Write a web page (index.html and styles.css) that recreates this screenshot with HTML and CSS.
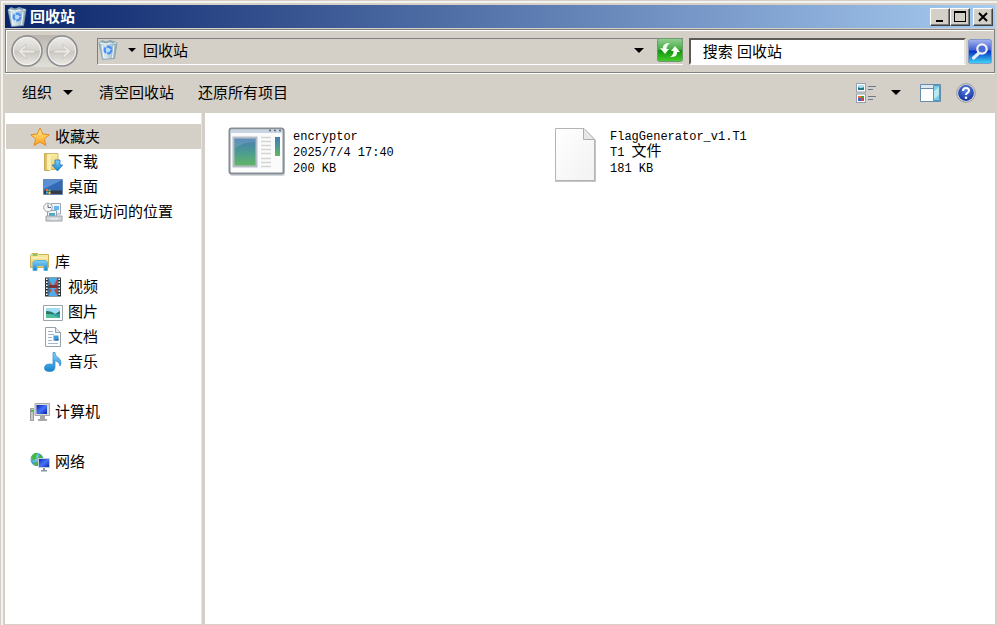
FILE: index.html
```html
<!DOCTYPE html>
<html lang="zh-CN">
<head>
<meta charset="utf-8">
<title>回收站</title>
<link rel="stylesheet" href="styles.css">
</head>
<body>
<svg class="defs" aria-hidden="true">
  <defs>
    <linearGradient id="bin" x1="0" y1="0" x2="1" y2="0"><stop offset="0" stop-color="#8eaebd"/><stop offset=".35" stop-color="#d9e9ee"/><stop offset="1" stop-color="#86a3b2"/></linearGradient>
    <linearGradient id="gold" x1="0" y1="0" x2="0" y2="1"><stop offset="0" stop-color="#fff08a"/><stop offset="1" stop-color="#ff9d1c"/></linearGradient>
    <linearGradient id="folder" x1="0" y1="0" x2="0" y2="1"><stop offset="0" stop-color="#faeea6"/><stop offset="1" stop-color="#e3c66b"/></linearGradient>
    <linearGradient id="sky" x1="0" y1="0" x2="0" y2="1"><stop offset="0" stop-color="#82d2f7"/><stop offset="1" stop-color="#1583d0"/></linearGradient>
    <linearGradient id="screen" x1="0" y1="0" x2="1" y2="1"><stop offset="0" stop-color="#0a1bb0"/><stop offset=".5" stop-color="#4474f4"/><stop offset="1" stop-color="#0b1ca8"/></linearGradient>
    <linearGradient id="app" x1="0" y1="0" x2="0" y2="1"><stop offset="0" stop-color="#4679b4"/><stop offset=".5" stop-color="#4c9b93"/><stop offset="1" stop-color="#63b763"/></linearGradient>
    <linearGradient id="sheet" x1="0" y1="0" x2="1" y2="1"><stop offset="0" stop-color="#ffffff"/><stop offset="1" stop-color="#f2f2f2"/></linearGradient>
    <linearGradient id="green" x1="0" y1="0" x2="0" y2="1"><stop offset="0" stop-color="#93cf93"/><stop offset=".48" stop-color="#45ab42"/><stop offset=".5" stop-color="#0f910e"/><stop offset="1" stop-color="#47ce2c"/></linearGradient>
    <linearGradient id="blue" x1="0" y1="0" x2="0" y2="1"><stop offset="0" stop-color="#a6b6ee"/><stop offset=".42" stop-color="#4762d4"/><stop offset=".5" stop-color="#0b36c6"/><stop offset="1" stop-color="#3bdcf7"/></linearGradient>
    <linearGradient id="disc" x1="0" y1="0" x2="0" y2="1"><stop offset="0" stop-color="#efedea"/><stop offset=".48" stop-color="#d6d3ce"/><stop offset=".52" stop-color="#c9c5bf"/><stop offset="1" stop-color="#eeece8"/></linearGradient>
    <radialGradient id="help" cx=".5" cy=".3" r=".7"><stop offset="0" stop-color="#5d83e2"/><stop offset="1" stop-color="#12319d"/></radialGradient>
    <radialGradient id="globe" cx=".35" cy=".35" r=".7"><stop offset="0" stop-color="#9be6ff"/><stop offset="1" stop-color="#1470c4"/></radialGradient>
    <symbol id="recycle" viewBox="0 0 20 20">
      <path d="M1 3 4 0.500 8 2 12 0.500 19 2.500 16.500 18.500 4.500 19.500Z" fill="url(#bin)" stroke="#7f9dab" stroke-width=".8"/>
      <path d="M1.500 3 6 4 12 3 18.500 3M4 5 6 18M16 5 14.500 18" fill="none" stroke="#f3fafc" stroke-width="1"/>
      <path d="M4 1.500 8 3 12 1.500 16 3" fill="none" stroke="#5d7d8e" stroke-width=".7"/>
      <circle cx="10" cy="10" r="3.400" fill="#b9dcfa" stroke="#4a8ff0" stroke-width="2.200" stroke-dasharray="6 1.100"/>
    </symbol>
  </defs>
</svg>
<div class="window">
  <header class="titlebar">
    <svg class="icon20" aria-hidden="true"><use href="#recycle"/></svg>
    <h1>回收站</h1>
    <div class="window-buttons">
      <button type="button" aria-label="最小化"><svg viewBox="0 0 16 14"><path d="M4 10h7v2H4z"/></svg></button>
      <button type="button" aria-label="最大化"><svg viewBox="0 0 16 14"><path d="M2 1h12v11H2zM3 3v8h10V3z" fill-rule="evenodd"/></svg></button>
      <button type="button" class="close" aria-label="关闭"><svg viewBox="0 0 16 14"><path d="m4 3 8 8m0-8-8 8" fill="none" stroke="#000" stroke-width="2"/></svg></button>
    </div>
  </header>

  <div class="navbar">
    <div class="history">
      <button type="button" aria-label="后退"><svg viewBox="0 0 32 32"><circle cx="16" cy="16" r="15" fill="url(#disc)" stroke="#8b8d91" stroke-width="1.500"/><circle cx="16" cy="16" r="13.600" fill="none" stroke="#f4f2ee"/><path d="M7 16 15 9v4L12 15H24v3H12l3 2v4Z" fill="#e9e7e3" stroke="#c6c3bd" stroke-width=".8"/></svg></button>
      <button type="button" aria-label="前进"><svg viewBox="0 0 32 32"><circle cx="16" cy="16" r="15" fill="url(#disc)" stroke="#8b8d91" stroke-width="1.500"/><circle cx="16" cy="16" r="13.600" fill="none" stroke="#f4f2ee"/><path d="M25 16 17 9v4L20 15H8v3H20l-3 2v4Z" fill="#e9e7e3" stroke="#c6c3bd" stroke-width=".8"/></svg></button>
    </div>
    <div class="address">
      <svg class="icon20" aria-hidden="true"><use href="#recycle"/></svg>
      <button type="button" class="crumb"><svg class="arrow-small" viewBox="0 0 8 4"><path d="M0 0h8L4 4z"/></svg><span>回收站</span></button>
      <button type="button" class="drop" aria-label="以前的位置"><svg class="arrow" viewBox="0 0 10 5"><path d="M0 0h10L5 5z"/></svg></button>
      <button type="button" class="refresh" aria-label="刷新"><svg viewBox="0 0 26 24"><rect x=".5" y=".5" width="25" height="23" rx="2" fill="url(#green)" stroke="#6c9a6c"/><path d="M3 10 8 16 12 11H9.500Q9.500 7.500 13 5 5.500 5 5.800 10.500ZM23 14 18 8 14 13h2.500Q16.500 17 13 19 20.500 19.500 20.200 14Z" fill="#f5fff2"/></svg></button>
    </div>
    <form class="search">
      <input type="text" aria-label="搜索" placeholder="搜索 回收站">
      <button type="button" aria-label="搜索"><svg viewBox="0 0 24 25"><rect x=".5" y=".5" width="23" height="24" rx="2" fill="url(#blue)" stroke="#8299cc"/><path d="m11 14-5.500 5" stroke="#e9edf5" stroke-width="3.200" stroke-linecap="round"/><circle cx="14" cy="10" r="4.700" fill="#4a6ad6" stroke="#f1f3f8" stroke-width="2.200"/></svg></button>
    </form>
  </div>

  <div class="commands">
    <button type="button" class="organize">组织<svg class="arrow" viewBox="0 0 10 5"><path d="M0 0h10L5 5z"/></svg></button>
    <button type="button">清空回收站</button>
    <button type="button">还原所有项目</button>
    <div class="view-tools">
      <button type="button" aria-label="更改视图"><svg class="icon20" viewBox="0 0 20 20"><g fill="#fff" stroke="#94a1b1"><rect x=".5" y=".5" width="9" height="8.500"/><rect x=".5" y="11" width="9" height="8.500"/></g><path d="M2 2h6v3H2z" fill="#b1e0f6"/><path d="M2 4q3 2 6 0v3H2z" fill="#267b83"/><path d="M2 13h3v2H2z" fill="#e0752b"/><path d="M5 13h3v2H5z" fill="#3ba349"/><path d="M2 15h3v3H2z" fill="#5a5fc1"/><path d="M5 15h3v3H5z" fill="#d34343"/><path d="M12 3.500h8M12 6.500h5M12 13.500h8M12 16.500h5" stroke="#6b7a8c" stroke-width="1.200"/></svg></button>
      <button type="button" class="more" aria-label="更多选项"><svg class="arrow" viewBox="0 0 10 5"><path d="M0 0h10L5 5z"/></svg></button>
      <button type="button" aria-label="显示预览窗格"><svg class="pane-icon" viewBox="0 0 21 18"><path d="M.5.500h20v17H.5z" fill="#fff" stroke="#668bad"/><path d="M1 1h19v3H1z" fill="#dce8f2"/><path d="M1 4.500h13" stroke="#668bad"/><path d="M13.500 1.500h6v15h-6z" fill="#7bcde4" stroke="#4b99bf"/><path d="m14 7 5-4v8l-5 4z" fill="#b8e9f3"/></svg></button>
      <button type="button" class="help" aria-label="帮助"><svg class="icon20" viewBox="0 0 20 20"><circle cx="10" cy="10" r="9.300" fill="#dcdcdf" stroke="#9698a0"/><circle cx="10" cy="10" r="7.900" fill="url(#help)"/><path d="M7 8q0-3 3-3t3 2.600q0 1.400-1.500 2.300T10 12" fill="none" stroke="#fff" stroke-width="2"/><circle cx="10" cy="14.700" r="1.300" fill="#fff"/></svg></button>
    </div>
  </div>

  <div class="content">
    <nav class="sidebar" aria-label="导航">
      <section>
        <a href="#" class="root selected"><svg class="icon20" viewBox="0 0 20 20"><path d="m10 1 2.700 6 6.500.7-4.900 4.300 1.500 6.500L10 15l-5.800 3.500L5.700 12 .8 7.700 7.300 7Z" fill="url(#gold)" stroke="#e58a24" stroke-linejoin="round"/></svg>收藏夹</a>
        <a href="#"><svg class="icon20" viewBox="0 0 20 20"><path d="M1.500 1.500h6v17h-6z" fill="#dfc36c" stroke="#c9a952"/><path d="M4.500 1.500H15v16H4.500z" fill="url(#folder)" stroke="#d2b768"/><path d="m4 2 4 2v15l-4-1.500z" fill="#fbefaf"/><path d="M12 8h5v5h2.700l-5.200 6L9.300 13H12Z" fill="url(#sky)" stroke="#1976bf" stroke-width=".8"/></svg>下载</a>
        <a href="#"><svg class="icon20" viewBox="0 0 20 20"><path d="M.5 2.500h19v15H.5z" fill="#3469b5" stroke="#668aaf"/><path d="M1 3h18L1 12z" fill="#5a91d6"/><path d="M1 13.500h18V17H1z" fill="#353d4b"/><path d="M3 12h2v2H3z" fill="#f36f31"/><path d="M5.500 12.500h2v2h-2z" fill="#7acc49"/><path d="M3 14.500h2v2H3z" fill="#41b8f5"/><path d="M5.500 15h2v2h-2z" fill="#ffd348"/></svg>桌面</a>
        <a href="#"><svg class="icon20" viewBox="0 0 20 20"><path d="M8.500 1.500h9V12h-9z" fill="#eef4f8" stroke="#9cabb6"/><path d="M11 4h5v4h-5z" fill="#64b8f2"/><path d="M4.500 8.500h9V17h-9z" fill="#f1f6f8" stroke="#96a4ae"/><path d="M6 11h6v3H6z" fill="#48abc9"/><path d="M3 14h16v5H3z" fill="#d1d6da" stroke="#9ba2a8"/><path d="M7 17h8" stroke="#f4f4f4"/><circle cx="5" cy="5.500" r="4.300" fill="#f3f5f6" stroke="#9ca3a9"/><path d="M5 2.500v3H8" fill="none" stroke="#66717a"/></svg>最近访问的位置</a>
      </section>
      <section>
        <a href="#" class="root"><svg class="icon20" viewBox="0 0 20 20"><path d="M.5 3.500 2 1.500h6l1 1h9.500v13H.5z" fill="url(#folder)" stroke="#cdb15a"/><path d="M2.500 3h5" stroke="#69b64a" stroke-width="1.500"/><path d="M1 6h17" stroke="#fff6ca"/><path d="M3 18.500V10l2.500-1.500h10L17.500 10v8.500H14v-5H7v5Z" fill="url(#sky)" stroke="#5db2da"/></svg>库</a>
        <a href="#"><svg class="icon20" viewBox="0 0 20 20"><path d="M2 .5h16v19H2z" fill="#29363e"/><path d="M5.500 1h9v8.500h-9zM5.500 10.500h9V19h-9z" fill="#4fabe7"/><path d="m6 3 3 5-3 1zM14 2l-3 6 3 1zM6 17l3-4-3-2zM14 18l-3-5 3-2z" fill="#b64b48"/><path d="M6 8h8v3H6z" fill="#7c3336"/><path d="M3.800 1.500v18M16.200 1.500v18" stroke="#fff" stroke-width="1.600" stroke-dasharray="1.500 1.500"/></svg>视频</a>
        <a href="#"><svg class="icon20" viewBox="0 0 20 20"><path d="M.5 3.500h19v15H.5z" fill="#fff" stroke="#9ba3aa"/><path d="M3 6h14v10H3z" fill="#a3dcf5"/><path d="M3 9q6 0 9 3l5-3v4H3z" fill="#267b62"/><path d="M3 12h14v4H3z" fill="#2b9dae"/><path d="m3 12 6 .4L17 16H3z" fill="#53be9c"/></svg>图片</a>
        <a href="#"><svg class="icon20" viewBox="0 0 20 20"><path d="M2.500.5h10l5 5v14h-15z" fill="#fcfdfe" stroke="#98a1aa"/><path d="M12.500.5v5h5" fill="#e0e6eb" stroke="#98a1aa"/><path d="M5 4.500h5M5 7.500h6M5 10.500h4M5 13.500h4M5 16.500h10" stroke="#a6b5c8"/><path d="M10.500 8.500h5v5h-5z" fill="#3e9bd1"/><path d="m10.500 13.500 5-2v2z" fill="#3559a1"/></svg>文档</a>
        <a href="#"><svg class="icon20" viewBox="0 0 20 20"><path d="M10 .5h2q0 3 3.500 5.500 4 3.500 1.500 8-.4-4-5-5.500V15q0 4.500-5.500 4.500-5 0-5-3.500 0-4 5.500-4 2 0 3 .5Z" fill="url(#sky)" stroke="#2e87c8" stroke-width=".7"/></svg>音乐</a>
      </section>
      <section>
        <a href="#" class="root"><svg class="icon20" viewBox="0 0 20 20"><path d="M.5 6.500h3v12h-3z" fill="#c6c9c8" stroke="#989b9b"/><path d="M1 8h2v2H1z" fill="#40bf39"/><path d="M5 1.500h14.500v12H5z" fill="#d9dbd9" stroke="#a5a8a7"/><path d="M6.500 3H17v9H6.500z" fill="url(#screen)"/><path d="M10 14h5v3h2v2H8v-2h2z" fill="#a6a8a6"/></svg>计算机</a>
      </section>
      <section>
        <a href="#" class="root"><svg class="icon20" viewBox="0 0 20 20"><circle cx="7" cy="7.500" r="6.500" fill="url(#globe)"/><path d="M1 5q3-5 7-4L6 4 7 6 3 9zM3 11l4-1 1 4q-4 0-5-3zM10 2l3 4-3 1-2-2z" fill="#47b647"/><path d="M8.500 6.500h11v9h-11z" fill="url(#screen)" stroke="#c3ced8"/><path d="M13 16h2v2h2v1.500h-6V18h2z" fill="#8395a4"/></svg>网络</a>
      </section>
    </nav>
    <main class="files">
      <article class="file">
        <svg class="file-icon" viewBox="0 0 58 58" aria-hidden="true"><rect x="2" y="5" width="55" height="47" rx="2" fill="#d4d6d8"/><rect x="1.500" y="4.500" width="54" height="45" rx="2" fill="#fbfbfb" stroke="#858f99" stroke-width="2"/><path d="M3 6h51v3H3z" fill="#c9d5e2"/><path d="M41 6.500h2M46 6.500h2M51 6.500h2" stroke="#526982" stroke-width="1.500"/><path d="M5.500 13.500h23v29h-23z" fill="url(#app)" stroke="#b5bec6" stroke-width="2"/><path d="M7 24q9-6 20-6v-4H7z" fill="#fff" opacity=".13"/><path d="M33 13.500h10M33 17.500h10M33 21.500h10M33 25.500h10M33 29.500h10M33 34.500h10M33 38.500h10M33 42.500h10" stroke="#d2d4d6" stroke-width="1.500"/><path d="M47 13h5v19h-5z" fill="url(#app)"/></svg>
        <div class="details"><h2>encryptor</h2><p>2025/7/4 17:40</p><p>200 KB</p></div>
      </article>
      <article class="file">
        <svg class="file-icon" viewBox="0 0 58 58" aria-hidden="true"><path d="M10 5h30l11 11v42H10z" fill="#c5c5c5"/><path d="M10.500 4.500H39L49.500 15.500v41h-39z" fill="url(#sheet)" stroke="#b4b4b4"/><path d="M38.500 5v10.500h10.500" fill="#e7e7e7" stroke="#acacac"/></svg>
        <div class="details"><h2>FlagGenerator_v1.T1</h2><p>T1 <span class="kind">文件</span></p><p>181 KB</p></div>
      </article>
    </main>
  </div>
</div>
</body>
</html>
```
FILE: styles.css
```css
* { box-sizing: border-box; }

body {
  margin: 0;
  background: #d4d0c8;
  color: #000;
  font: 15px/25px "Liberation Sans", "Noto Sans CJK SC", sans-serif;
}

.defs {
  position: absolute;
  width: 0;
  height: 0;
}

h1, h2, p { margin: 0; font-size: inherit; }

button {
  padding: 0;
  border: 0;
  background: none;
  color: inherit;
  font: inherit;
}

svg { display: block; flex: none; }
.icon20 { width: 20px; height: 20px; }
.arrow { width: 10px; height: 5px; }
.arrow-small { width: 8px; height: 4px; }

.window {
  display: flex;
  flex-direction: column;
  height: 100vh;
  padding: 5px 2px 1px 5px;
  box-shadow: inset 1px 1px #d4d0c8, inset 3px 3px #f4f2ee;
}

.titlebar {
  display: flex;
  align-items: center;
  gap: 3px;
  height: 23px;
  padding: 0 2px;
  background: linear-gradient(90deg, #0a246a, #a6caf0);
  color: #fff;
}

.window-buttons {
  display: flex;
  margin-left: auto;
}

.window-buttons button {
  width: 20px;
  height: 18px;
  padding: 1px;
  background: #d4d0c8;
  border: 1px solid;
  border-color: #fff #404040 #404040 #fff;
  box-shadow: inset -1px -1px #808080;
}

.window-buttons svg { width: 16px; height: 14px; }
.window-buttons .close { margin-left: 3px; }

.navbar {
  display: flex;
  align-items: center;
  height: 44px;
  margin-top: 1px;
  padding: 0 2px 0 5px;
  border: 1px solid #808080;
  box-shadow: inset 1px 1px #fff, 0 1px #fff;
}

.history {
  display: flex;
  gap: 3px;
  border-radius: 16px;
  background: linear-gradient(#bbb7b0, #e2dfd9);
}

.history svg { width: 32px; height: 32px; }

.address {
  display: flex;
  flex: 27 1 0;
  align-items: center;
  height: 27px;
  margin-left: 19px;
  padding-bottom: 2px;
  border: solid;
  border-width: 1px 0 1px 1px;
  border-color: #808080 #fff #fff #808080;
}

.crumb {
  display: flex;
  align-items: center;
  gap: 7px;
  margin-left: 10px;
}

.drop { margin-left: auto; }
.refresh { margin-left: 13px; }
.refresh svg { width: 26px; height: 24px; }

.search {
  display: flex;
  flex: 14 1 0;
  align-items: center;
  gap: 2px;
  margin-left: 6px;
}

.search input {
  flex: 1;
  min-width: 0;
  height: 27px;
  padding: 0 12px;
  border: 2px solid;
  border-color: #5c5a56 #e8e5df #fff #5c5a56;
  border-radius: 0;
  background: #fff;
  font: inherit;
}

.search input::placeholder { color: #000; opacity: 1; }
.search button svg { width: 24px; height: 25px; }

.commands {
  display: flex;
  align-items: center;
  gap: 24px;
  height: 39px;
  margin-bottom: 1px;
  padding: 0 19px 0 17px;
}

.commands button {
  display: flex;
  align-items: center;
  gap: 11px;
}

.commands .organize { padding-right: 2px; }

.view-tools {
  display: flex;
  align-items: center;
  gap: 15px;
  margin-left: auto;
}

.view-tools .more { margin-right: 4px; }
.pane-icon { width: 21px; height: 18px; }

.content {
  display: flex;
  flex: 1;
  min-height: 0;
}

.sidebar {
  flex: 0 0 197px;
  padding-top: 11px;
  border-right: 1px solid #e8e5df;
  background: #fff;
}

.sidebar section { margin-bottom: 25px; }

.sidebar a {
  display: flex;
  align-items: center;
  gap: 5px;
  height: 25px;
  margin-left: 1px;
  padding-left: 37px;
  color: inherit;
  text-decoration: none;
}

.sidebar .root { padding-left: 24px; }
.sidebar .selected { background: #d4d0c8; }

.files {
  display: grid;
  flex: 1;
  grid-template-columns: 317px 317px;
  align-content: start;
  margin-left: 3px;
  padding: 11px 23px;
  background: #fff;
}

.file {
  display: flex;
  align-items: flex-start;
  gap: 7px;
}

.file-icon { width: 58px; height: 58px; }

.details {
  padding-top: 5px;
  font: 12px/16px "Liberation Mono", "Noto Sans CJK SC", monospace;
}

.details h2 { font-weight: 400; }

.kind {
  font-size: 15px;
  line-height: 1;
}
```
